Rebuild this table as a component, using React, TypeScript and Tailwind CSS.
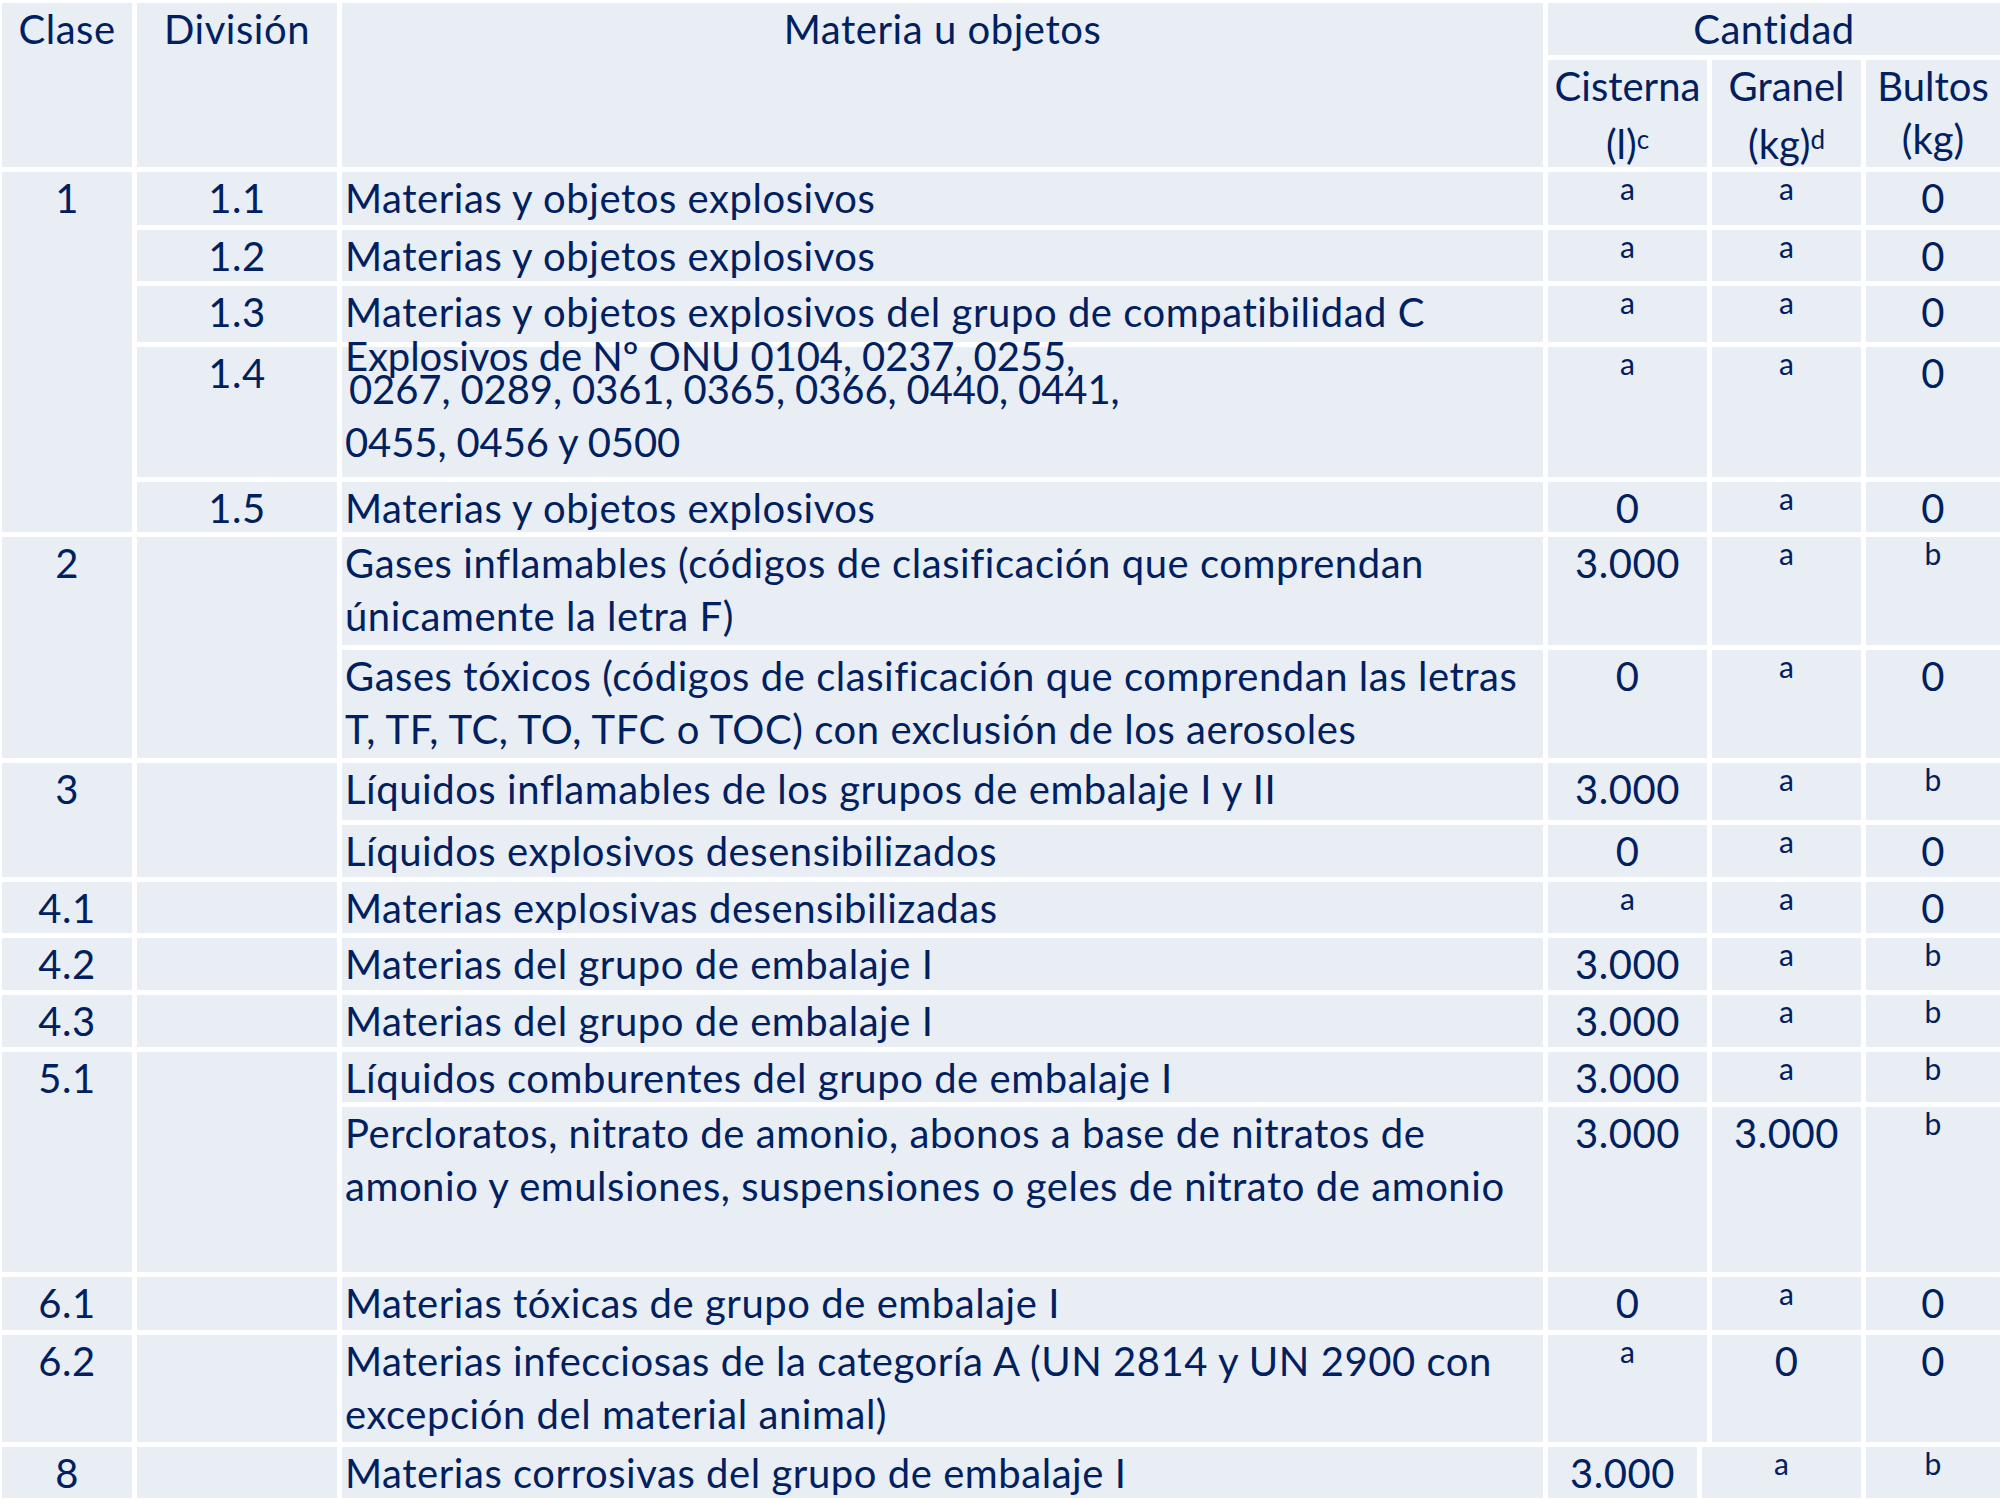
import React from 'react';

type Q = string;

const BODY = 'bg-[#e9edf4]';
const NUM = 'text-center leading-[53px]';
const SUP = 'text-center text-[30px] leading-[30px] pt-[1px] tracking-normal';

function Qty({ v }: { v: Q }) {
  const small = v === 'a' || v === 'b';
  return <div className={`${BODY} ${small ? SUP : NUM}`}>{v}</div>;
}

function Text({ lines }: { lines: string[] }) {
  return (
    <div className={`${BODY} pl-[3px] leading-[53px] whitespace-nowrap`}>
      {lines.map((l) => (
        <div key={l}>{l}</div>
      ))}
    </div>
  );
}

type Row = { text: string[]; q: [Q, Q, Q] };

export default function App() {
  const explosives: { div: string; row: Row }[] = [
    { div: '1.1', row: { text: ['Materias y objetos explosivos'], q: ['a', 'a', '0'] } },
    { div: '1.2', row: { text: ['Materias y objetos explosivos'], q: ['a', 'a', '0'] } },
    {
      div: '1.3',
      row: { text: ['Materias y objetos explosivos del grupo de compatibilidad C'], q: ['a', 'a', '0'] },
    },
  ];

  return (
    <div className="min-h-screen bg-white pt-[3px] pl-[2px] font-['Lato',sans-serif] text-[40px] tracking-[0.55px] text-[#002060]">
      <div className="grid grid-cols-[130px_200px_1201px_159px_149px_134px] grid-rows-[52px_107px_53px_51px_56px_130px_50px_108px_108px_57px_52px_51px_52px_52px_50px_165px_53px_107px_51px] gap-[5px]">
        {/* Header */}
        <div className={`${BODY} row-span-2 text-center leading-[53px]`}>Clase</div>
        <div className={`${BODY} row-span-2 text-center leading-[53px]`}>División</div>
        <div className={`${BODY} row-span-2 text-center leading-[53px]`}>Materia u objetos</div>
        <div className={`${BODY} col-span-3 text-center leading-[53px]`}>Cantidad</div>
        <div className={`${BODY} text-center leading-[53px] whitespace-nowrap tracking-normal`}>
          <div>Cisterna</div>
          <div>
            (l)<span className="text-[26px] align-[10px]">c</span>
          </div>
        </div>
        <div className={`${BODY} text-center leading-[53px] tracking-normal`}>
          <div>Granel</div>
          <div>
            (kg)<span className="text-[26px] align-[10px]">d</span>
          </div>
        </div>
        <div className={`${BODY} text-center leading-[53px] tracking-normal`}>
          <div>Bultos</div>
          <div>(kg)</div>
        </div>

        {/* Clase 1 */}
        <div className={`${BODY} row-span-5 text-center leading-[53px]`}>1</div>
        {explosives.map((e) => (
          <React.Fragment key={e.div}>
            <div className={`${BODY} ${NUM}`}>{e.div}</div>
            <Text lines={e.row.text} />
            {e.row.q.map((v, i) => (
              <Qty key={i} v={v} />
            ))}
          </React.Fragment>
        ))}
        <div className={`${BODY} ${NUM}`}>1.4</div>
        <div className={`${BODY} pl-[3px] leading-[53px] whitespace-nowrap tracking-[-0.1px]`}>
          <div className="-mt-[17px]">Explosivos de Nº ONU 0104, 0237, 0255,</div>
          <div className="-mt-[20px] pl-[4px]">0267, 0289, 0361, 0365, 0366, 0440, 0441,</div>
          <div>0455, 0456 y 0500</div>
        </div>
        <Qty v="a" />
        <Qty v="a" />
        <Qty v="0" />
        <div className={`${BODY} ${NUM}`}>1.5</div>
        <Text lines={['Materias y objetos explosivos']} />
        <Qty v="0" />
        <Qty v="a" />
        <Qty v="0" />

        {/* Clase 2 */}
        <div className={`${BODY} row-span-2 ${NUM}`}>2</div>
        <div className={`${BODY} row-span-2`} />
        <Text lines={['Gases inflamables (códigos de clasificación que comprendan', 'únicamente la letra F)']} />
        <Qty v="3.000" />
        <Qty v="a" />
        <Qty v="b" />
        <Text
          lines={[
            'Gases tóxicos (códigos de clasificación que comprendan las letras',
            'T, TF, TC, TO, TFC o TOC) con exclusión de los aerosoles',
          ]}
        />
        <Qty v="0" />
        <Qty v="a" />
        <Qty v="0" />

        {/* Clase 3 */}
        <div className={`${BODY} row-span-2 ${NUM}`}>3</div>
        <div className={`${BODY} row-span-2`} />
        <Text lines={['Líquidos inflamables de los grupos de embalaje I y II']} />
        <Qty v="3.000" />
        <Qty v="a" />
        <Qty v="b" />
        <Text lines={['Líquidos explosivos desensibilizados']} />
        <Qty v="0" />
        <Qty v="a" />
        <Qty v="0" />

        {/* 4.1 - 4.3 */}
        <div className={`${BODY} ${NUM}`}>4.1</div>
        <div className={BODY} />
        <Text lines={['Materias explosivas desensibilizadas']} />
        <Qty v="a" />
        <Qty v="a" />
        <Qty v="0" />
        <div className={`${BODY} ${NUM}`}>4.2</div>
        <div className={BODY} />
        <Text lines={['Materias del grupo de embalaje I']} />
        <Qty v="3.000" />
        <Qty v="a" />
        <Qty v="b" />
        <div className={`${BODY} ${NUM}`}>4.3</div>
        <div className={BODY} />
        <Text lines={['Materias del grupo de embalaje I']} />
        <Qty v="3.000" />
        <Qty v="a" />
        <Qty v="b" />

        {/* 5.1 */}
        <div className={`${BODY} row-span-2 ${NUM}`}>5.1</div>
        <div className={`${BODY} row-span-2`} />
        <Text lines={['Líquidos comburentes del grupo de embalaje I']} />
        <Qty v="3.000" />
        <Qty v="a" />
        <Qty v="b" />
        <Text
          lines={[
            'Percloratos, nitrato de amonio, abonos a base de nitratos de',
            'amonio y emulsiones, suspensiones o geles de nitrato de amonio',
          ]}
        />
        <Qty v="3.000" />
        <Qty v="3.000" />
        <Qty v="b" />

        {/* 6.1, 6.2 */}
        <div className={`${BODY} ${NUM}`}>6.1</div>
        <div className={BODY} />
        <Text lines={['Materias tóxicas de grupo de embalaje I']} />
        <Qty v="0" />
        <Qty v="a" />
        <Qty v="0" />
        <div className={`${BODY} ${NUM}`}>6.2</div>
        <div className={BODY} />
        <Text lines={['Materias infecciosas de la categoría A (UN 2814 y UN 2900 con', 'excepción del material animal)']} />
        <Qty v="a" />
        <Qty v="0" />
        <Qty v="0" />

        {/* 8 */}
        <div className={`${BODY} ${NUM}`}>8</div>
        <div className={BODY} />
        <Text lines={['Materias corrosivas del grupo de embalaje I']} />
        <div className="col-span-2 flex gap-[5px]">
          <div className={`${BODY} w-[149px] ${NUM}`}>3.000</div>
          <div className={`${BODY} flex-1 ${SUP}`}>a</div>
        </div>
        <Qty v="b" />
      </div>
    </div>
  );
}
